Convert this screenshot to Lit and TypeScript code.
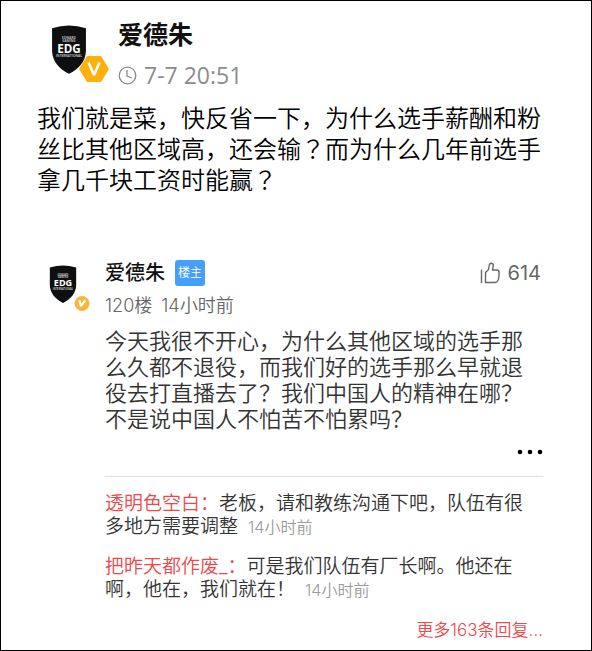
import { LitElement, html, css, svg } from "lit";
import { customElement, property } from "lit/decorators.js";

interface Reply {
  author: string;
  text: string;
  time: string;
}

const REPLIES: Reply[] = [
  { author: "透明色空白", text: "老板，请和教练沟通下吧，队伍有很多地方需要调整", time: "14小时前" },
  { author: "把昨天都作废_", text: "可是我们队伍有厂长啊。他还在啊，他在，我们就在！", time: "14小时前" },
];

const POST =
  "我们就是菜，快反省一下，为什么选手薪酬和粉丝比其他区域高，还会输？而为什么几年前选手拿几千块工资时能赢？";

@customElement("team-avatar")
export class TeamAvatar extends LitElement {
  @property() badge: "hexagon" | "circle" = "hexagon";

  static styles = css`
    :host {
      display: block;
      position: relative;
    }
    .shield {
      display: block;
      width: 100%;
    }
    .badge {
      position: absolute;
    }
    .hexagon {
      width: 30px;
      left: 28px;
      bottom: -9px;
    }
    .circle {
      width: 16px;
      left: 25px;
      bottom: -8px;
    }
    text {
      font-family: "Open Sans", "Liberation Sans", sans-serif;
      font-weight: 700;
      fill: #fff;
      text-anchor: middle;
    }
    .small {
      fill: #bbb;
    }
  `;

  render() {
    const mark =
      this.badge === "hexagon"
        ? svg`<path d="M8 1H22L30 14L22 27H8L0 14Z" fill="#fdb10a"/><path d="M9.500 7.500L15 20L20.500 7.500" fill="none" stroke="#fff" stroke-width="2.600" stroke-linejoin="bevel"/>`
        : svg`<circle cx="15" cy="14" r="14" fill="#f7b73c"/><path d="M10 8L13 19L21 8" fill="none" stroke="#fff" stroke-width="4" stroke-linejoin="bevel"/>`;
    return html`
      <svg class="shield" viewBox="0 0 34 46" role="img" aria-label="EDG">
        <path d="M1 3Q17 -2 33 3V24C33 34 26 42 17 46C8 42 1 34 1 24Z" fill="#0d0f11" />
        <text class="small" x="17" y="13" font-size="3">EDWARD</text>
        <text class="small" x="17" y="16" font-size="3">GAMING</text>
        <text x="17" y="26" font-size="11">EDG</text>
        <text class="small" x="17" y="30" font-size="3">INTERNATIONAL</text>
      </svg>
      <svg class="badge ${this.badge}" viewBox="0 0 30 28" role="img" aria-label="V">${mark}</svg>
    `;
  }
}

@customElement("app-root")
export class AppRoot extends LitElement {
  static styles = css`
    :host {
      display: block;
      box-sizing: border-box;
      min-height: 100vh;
      border: 1px solid #000;
      background: #fff;
      color: #333;
      font-family: Inter, "Noto Sans CJK SC", sans-serif;
      font-weight: 350;
    }
    h1, h2, p, ul {
      margin: 0;
      padding: 0;
    }
    ul {
      list-style: none;
    }
    button {
      border: 0;
      padding: 0;
      background: none;
      color: inherit;
      font: inherit;
      cursor: pointer;
    }
    .post {
      padding: 16px 36px 0;
    }
    .post-head {
      display: flex;
      gap: 31px;
      padding-left: 14px;
    }
    .post-avatar {
      width: 36px;
      margin-top: 8px;
      align-self: flex-start;
    }
    .post-name {
      font-size: 25px;
      line-height: 36px;
      font-weight: 700;
      color: #111;
    }
    .post-date {
      display: flex;
      align-items: center;
      gap: 7px;
      margin-top: 7px;
      font-family: "Open Sans", sans-serif;
      font-size: 23px;
      font-weight: 400;
      line-height: 30px;
      color: #8b8b8f;
    }
    .clock {
      width: 19px;
      height: 19px;
    }
    .post-text {
      margin-top: 13px;
      font-size: 24px;
      line-height: 31px;
      color: #000;
    }
    .centered {
      font-family: "Noto Sans CJK TC", sans-serif;
      line-height: 1;
    }
    .comment {
      display: grid;
      grid-template-columns: 28px minmax(0, 1fr);
      column-gap: 28px;
      padding: 63px 48px 4px;
    }
    .comment-avatar {
      margin-top: 6px;
      align-self: start;
    }
    .comment-head {
      display: flex;
      align-items: center;
      height: 28px;
    }
    .comment-name {
      font-size: 20px;
      line-height: 28px;
      font-weight: 500;
      color: #111;
    }
    .tag {
      margin-left: 10px;
      width: 30px;
      border-radius: 3px;
      background: #479ffb;
      color: #fff;
      font-size: 12px;
      line-height: 26px;
      text-align: center;
    }
    .like {
      display: flex;
      align-items: center;
      gap: 8px;
      margin-left: auto;
      padding-right: 2px;
      font-size: 20px;
      font-weight: 400;
      line-height: 28px;
      color: #666;
    }
    .thumb {
      width: 20px;
      height: 22px;
    }
    .meta {
      display: flex;
      gap: 9px;
      margin-top: 6px;
      font-size: 18px;
      line-height: 26px;
      color: #666;
    }
    .comment-text {
      margin-top: 9px;
      font-size: 22px;
      line-height: 26px;
    }
    .actions {
      display: flex;
      justify-content: flex-end;
      height: 40px;
      padding-bottom: 4px;
      align-items: center;
      border-bottom: 1px solid #e0e0e0;
    }
    .dots {
      display: block;
      width: 26px;
      height: 6px;
    }
    .replies {
      display: grid;
      gap: 16px;
      padding: 15px 2px 0 0;
      font-size: 19px;
      line-height: 23px;
    }
    .author {
      color: #f04848;
    }
    .time {
      margin-left: 10px;
      font-size: 16px;
      color: #999;
    }
    .more {
      display: block;
      width: fit-content;
      margin: 15px 0 0 auto;
      font-size: 17px;
      line-height: 26px;
      color: #f04848;
      text-decoration: none;
    }
  `;

  render() {
    return html`
      <article class="post">
        <header class="post-head">
          <team-avatar class="post-avatar" badge="hexagon"></team-avatar>
          <div>
            <h1 class="post-name">爱德朱</h1>
            <div class="post-date">
              <svg class="clock" viewBox="0 0 19 19" fill="none" stroke="currentColor" stroke-width="1.300" aria-hidden="true">
                <circle cx="9.500" cy="9.500" r="8.300" />
                <path d="M9 4V10L14 12" />
              </svg>
              <time>7-7 20:51</time>
            </div>
          </div>
        </header>
        <p class="post-text">${POST.split(/(？)/).map((part) =>
          part === "？" ? html`<span class="centered">？</span>` : part
        )}</p>
      </article>

      <section class="comment">
        <team-avatar class="comment-avatar" badge="circle"></team-avatar>
        <div>
          <div class="comment-head">
            <h2 class="comment-name">爱德朱</h2>
            <span class="tag">楼主</span>
            <button class="like" aria-label="赞 614">
              <svg class="thumb" viewBox="0 0 20 22" fill="none" stroke="currentColor" stroke-width="1.400" stroke-linejoin="round" aria-hidden="true">
                <path d="M1.500 7.500V21M5.500 20.500V10.500L8.500 7.500L9.300 3Q9.800 1 11.500 1.200Q13.600 1.600 13.200 4L12.500 8H17Q19 8 19 10.500V14Q18.500 20.500 15 20.500Z" />
              </svg>
              <span>614</span>
            </button>
          </div>
          <div class="meta"><span>120楼</span><time>14小时前</time></div>
          <p class="comment-text">今天我很不开心，为什么其他区域的选手那么久都不退役，而我们好的选手那么早就退役去打直播去了？我们中国人的精神在哪？不是说中国人不怕苦不怕累吗？</p>
          <div class="actions">
            <button aria-label="更多操作">
              <svg class="dots" viewBox="0 0 26 6" fill="#000" aria-hidden="true">
                <circle cx="3" cy="3" r="2.300" /><circle cx="13" cy="3" r="2.300" /><circle cx="23" cy="3" r="2.300" />
              </svg>
            </button>
          </div>
          <ul class="replies">
            ${REPLIES.map(
              (r) => html`<li><span class="author">${r.author}：</span>${r.text}<time class="time">${r.time}</time></li>`
            )}
          </ul>
          <a class="more" href="#replies">更多163条回复...</a>
        </div>
      </section>
    `;
  }
}
